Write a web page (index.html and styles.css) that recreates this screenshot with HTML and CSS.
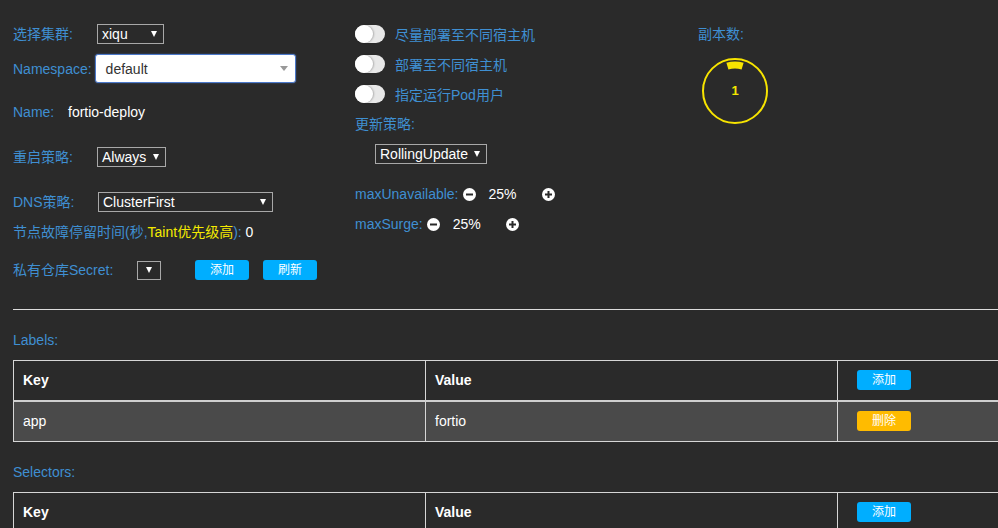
FILE: index.html
```html
<!DOCTYPE html>
<html lang="zh-CN">
<head>
<meta charset="utf-8">
<title>Deployment</title>
<link rel="stylesheet" href="styles.css">
</head>
<body>
<div class="page">
  <div class="top">
    <div class="col col-left">
      <div class="row"><span class="lbl w84">选择集群:</span><div class="sel w67"><span>xiqu</span><i class="caret"></i></div></div>
      <div class="row r-ns"><span class="lbl">Namespace:</span><div class="ns-input"><span>default</span><i class="caret grey"></i></div></div>
      <div class="row r-name"><span class="lbl w55">Name:</span><span class="val">fortio-deploy</span></div>
      <div class="row r-gap25"><span class="lbl w84">重启策略:</span><div class="sel w69"><span>Always</span><i class="caret"></i></div></div>
      <div class="row r-gap25"><span class="lbl w85">DNS策略:</span><div class="sel w175"><span>ClusterFirst</span><i class="caret"></i></div></div>
      <div class="row r-taint"><span class="lbl">节点故障停留时间(秒,<span class="yellow">Taint优先级高</span>):&nbsp;</span><span class="val">0</span></div>
      <div class="row r-secret"><span class="lbl w124">私有仓库Secret:</span><div class="sel w24 tiny"><i class="caret"></i></div><button class="btn blue first">添加</button><button class="btn blue">刷新</button></div>
    </div>
    <div class="col col-mid">
      <div class="trow"><span class="switch"><span class="knob"></span></span><span class="lbl">尽量部署至不同宿主机</span></div>
      <div class="trow"><span class="switch"><span class="knob"></span></span><span class="lbl">部署至不同宿主机</span></div>
      <div class="trow"><span class="switch"><span class="knob"></span></span><span class="lbl">指定运行Pod用户</span></div>
      <div class="row r-upd"><span class="lbl">更新策略:</span></div>
      <div class="row r-roll"><div class="sel w112"><span>RollingUpdate</span><i class="caret"></i></div></div>
      <div class="row r-max1"><span class="lbl">maxUnavailable:</span>
        <svg class="ico" viewBox="0 0 13 13" width="13" height="13"><circle cx="6.5" cy="6.5" r="6.5" fill="#fff"/><rect x="3" y="5.5" width="7" height="2" fill="#2a2a2a"/></svg>
        <span class="num">25%</span>
        <svg class="ico" viewBox="0 0 13 13" width="13" height="13"><circle cx="6.5" cy="6.5" r="6.5" fill="#fff"/><rect x="3" y="5.5" width="7" height="2" fill="#2a2a2a"/><rect x="5.5" y="3" width="2" height="7" fill="#2a2a2a"/></svg>
      </div>
      <div class="row r-max2"><span class="lbl">maxSurge:</span>
        <svg class="ico" viewBox="0 0 13 13" width="13" height="13"><circle cx="6.5" cy="6.5" r="6.5" fill="#fff"/><rect x="3" y="5.5" width="7" height="2" fill="#2a2a2a"/></svg>
        <span class="num">25%</span>
        <svg class="ico" viewBox="0 0 13 13" width="13" height="13"><circle cx="6.5" cy="6.5" r="6.5" fill="#fff"/><rect x="3" y="5.5" width="7" height="2" fill="#2a2a2a"/><rect x="5.5" y="3" width="2" height="7" fill="#2a2a2a"/></svg>
      </div>
    </div>
    <div class="col col-right">
      <div class="row"><span class="lbl">副本数:</span></div>
      <div class="gauge">
        <svg viewBox="0 0 70 70" width="70" height="70">
          <circle cx="35" cy="35" r="32" fill="none" stroke="#f7e400" stroke-width="2"/>
          <path d="M27.4 10.1 A26 26 0 0 1 42.6 10.1" fill="none" stroke="#f7e400" stroke-width="7"/>
        </svg>
        <span class="gauge-num">1</span>
      </div>
    </div>
  </div>

  <div class="rule"></div>

  <div class="row sec-title"><span class="lbl">Labels:</span></div>
  <table class="kv">
    <thead>
      <tr><th>Key</th><th>Value</th><th class="act"><button class="btn blue">添加</button></th></tr>
    </thead>
    <tbody>
      <tr><td>app</td><td>fortio</td><td class="act"><button class="btn yellow">删除</button></td></tr>
    </tbody>
  </table>

  <div class="row sec-title"><span class="lbl">Selectors:</span></div>
  <table class="kv">
    <thead>
      <tr><th>Key</th><th>Value</th><th class="act"><button class="btn blue">添加</button></th></tr>
    </thead>
    <tbody>
      <tr><td>app</td><td>fortio</td><td class="act"><button class="btn yellow">删除</button></td></tr>
    </tbody>
  </table>
</div>
</body>
</html>
```

FILE: styles.css
```css
html, body {
  margin: 0;
  padding: 0;
  overflow: hidden;
  background: #2a2a2a;
}
body {
  font-family: "Liberation Sans", Arial, "Noto Sans CJK SC", sans-serif;
  font-size: 14px;
  color: #fff;
}
.page {
  width: 1260px;
  padding-left: 13px;
}
.top {
  display: flex;
}
.col-left { width: 342px; padding-top: 24px; }
.col-mid { width: 343px; padding-top: 25px; }
.col-right { flex: 1; padding-top: 24px; }

.row {
  display: flex;
  align-items: center;
  height: 20px;
  line-height: 20px;
}
.lbl { color: #3f8fd2; white-space: nowrap; }
.val { color: #fff; }
.yellow { color: #f5ea00; }
.w84 { width: 84px; }
.w85 { width: 85px; }
.w55 { width: 55px; }
.w124 { width: 124px; }

.r-ns { height: 29px; margin-top: 10px; }
.r-name { margin-top: 19px; }
.r-gap25 { margin-top: 25px; }
.r-taint { margin-top: 10px; }
.r-secret { margin-top: 18px; }

.sel {
  box-sizing: border-box;
  height: 20px;
  border: 1px solid #a8a8a8;
  display: flex;
  align-items: center;
  justify-content: space-between;
  padding: 0 6px 0 4px;
  color: #fff;
}
.sel.tiny { height: 19px; justify-content: center; padding: 0; }
.w67 { width: 67px; }
.w69 { width: 69px; }
.w175 { width: 175px; }
.w112 { width: 112px; }
.w24 { width: 24px; }
.caret {
  display: block;
  width: 0;
  height: 0;
  border-left: 3px solid transparent;
  border-right: 3px solid transparent;
  border-top: 6px solid #fff;
}
.caret.grey { border-top-color: #999; border-left-width: 4px; border-right-width: 4px; border-top-width: 5px; }

.ns-input {
  box-sizing: border-box;
  margin-left: 3px;
  width: 201px;
  height: 29px;
  background: #fff;
  border: 1px solid #4b78c9;
  border-radius: 3px;
  box-shadow: 0 0 2px rgba(75, 120, 201, 0.6);
  display: flex;
  align-items: center;
  justify-content: space-between;
  padding: 0 7px 0 10px;
  color: #333;
}

.btn {
  box-sizing: border-box;
  width: 54px;
  height: 20px;
  border: 0;
  border-radius: 3px;
  padding: 0;
  font-family: "Liberation Sans", Arial, "Noto Sans CJK SC", sans-serif;
  font-size: 12px;
  line-height: 20px;
  color: #fff;
  text-align: center;
}
.btn.blue { background: #00aeff; }
.btn.yellow { background: #ffbb00; }
.btn.first { margin-left: 34px; margin-right: 14px; }

.trow {
  display: flex;
  align-items: center;
  height: 18px;
  margin-bottom: 12px;
}
.switch {
  position: relative;
  width: 30px;
  height: 18px;
  border-radius: 9px;
  background: #e8e8e8;
  margin-right: 10px;
  flex: none;
}
.knob {
  position: absolute;
  left: 0;
  top: 0;
  width: 18px;
  height: 18px;
  border-radius: 50%;
  background: #fff;
  box-shadow: 1px 0 2px rgba(0, 0, 0, 0.25);
}
.r-upd { margin-top: -1px; }
.r-roll { margin-top: 10px; margin-left: 20px; }
.r-max1 { margin-top: 20px; }
.r-max2 { margin-top: 10px; }
.ico { flex: none; margin-left: 4px; }
.num { width: 49px; margin-left: 13px; color: #fff; }

.gauge {
  position: relative;
  width: 70px;
  height: 70px;
  margin-top: 12px;
  margin-left: 2px;
}
.gauge svg { display: block; }
.gauge-num {
  position: absolute;
  left: 0;
  top: 0;
  width: 70px;
  height: 70px;
  line-height: 70px;
  text-align: center;
  font-weight: bold;
  font-size: 13px;
  color: #f5e800;
}

.rule {
  margin-top: 29px;
  height: 1px;
  background: #dcdcdc;
}
.sec-title { margin-top: 20px; margin-bottom: 10px; }

.kv {
  border-collapse: collapse;
  table-layout: fixed;
  width: 1237px;
}
.kv th, .kv td {
  border: 1px solid #d6d6d6;
  height: 41px;
  padding: 0 9px;
  text-align: left;
  vertical-align: middle;
  box-sizing: border-box;
}
.kv th {
  height: 40px;
  font-weight: bold;
  border-bottom: 2px solid #cfcfcf;
}
.kv tbody td { background: #4a4a4a; }
.kv .act { padding-left: 19px; }
.kv .act .btn { display: block; }
```
